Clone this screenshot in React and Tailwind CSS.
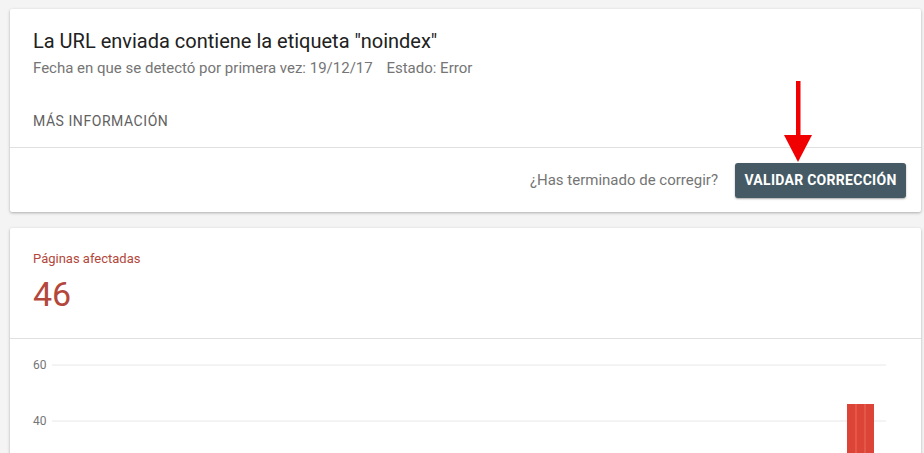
import React from 'react'

const font = { fontFamily: 'Roboto, "Noto Sans", sans-serif' }

function Arrow() {
    return (
        <svg className="absolute left-[774px] top-[72px]" width="48" height="92" viewBox="0 0 48 92">
            <rect x="22" y="9" width="4.5" height="56" fill="#f00000" />
            <polygon points="10,63 38,63 24,90" fill="#f00000" />
        </svg>
    )
}

function Chart() {
    // y axis 60 -> 364, 40 -> 420 (page coords)
    return (
        <svg width="911" height="115" className="block">
            <text x="23" y="30" fontSize="12" fill="#757575" style={font}>60</text>
            <line x1="42" y1="26" x2="876" y2="26" stroke="#e8e8e8" strokeWidth="1" />
            <text x="23" y="86" fontSize="12" fill="#757575" style={font}>40</text>
            <line x1="42" y1="82" x2="876" y2="82" stroke="#e8e8e8" strokeWidth="1" />
            <rect x="837" y="65" width="9" height="60" fill="#db4437" />
            <rect x="846" y="65" width="9" height="60" fill="#db4437" />
            <rect x="855" y="65" width="9" height="60" fill="#db4437" />
            <line x1="846" y1="65" x2="846" y2="125" stroke="#ec6a5c" strokeWidth="1" />
            <line x1="855" y1="65" x2="855" y2="125" stroke="#ec6a5c" strokeWidth="1" />
        </svg>
    )
}

export default function App() {
    return (
        <div className="relative w-[924px] h-[453px] overflow-hidden bg-[#f4f4f4] pt-[9px] pl-[10px] pr-[3px]" style={font}>

            {/* ISSUE CARD */}
            <div className="bg-white shadow-[0_1px_3px_rgba(0,0,0,0.3)] rounded-[2px]">
                <div className="px-[23px] pt-[18px] pb-[16px]">
                    <h1 className="text-[20px] leading-[28px] text-[#212121]">La URL enviada contiene la etiqueta "noindex"</h1>
                    <p className="mt-[3px] text-[15px] leading-[20px] text-[#757575]">
                        Fecha en que se detectó por primera vez: 19/12/17 <span className="ml-[10px]">Estado: Error</span>
                    </p>
                    <div className="mt-[33px] text-[14px] leading-[20px] tracking-[0.04em] text-[#616161] uppercase">Más información</div>
                </div>
                <div className="border-t border-[#e0e0e0] h-[65px] flex items-center justify-end pr-[15px]">
                    <span className="text-[15px] text-[#757575] mr-[17px]">¿Has terminado de corregir?</span>
                    <button className="bg-[#455a64] text-white text-[14px] font-bold tracking-[0.02em] uppercase h-[35px] w-[171px] rounded-[3px] shadow-[0_1px_2px_rgba(0,0,0,0.35)]">Validar corrección</button>
                </div>
            </div>

            {/* CHART CARD */}
            <div className="mt-[16px] bg-white shadow-[0_1px_3px_rgba(0,0,0,0.3)] rounded-[2px] h-[240px]">
                <div className="px-[23px] pt-[22px] h-[110px]">
                    <div className="text-[13px] leading-[18px] text-[#b3473b]">Páginas afectadas</div>
                    <div className="mt-[6px] text-[34px] leading-[40px] text-[#b3473b]">46</div>
                </div>
                <div className="border-t border-[#e0e0e0]">
                    <Chart />
                </div>
            </div>

            <Arrow />
        </div>
    )
}
